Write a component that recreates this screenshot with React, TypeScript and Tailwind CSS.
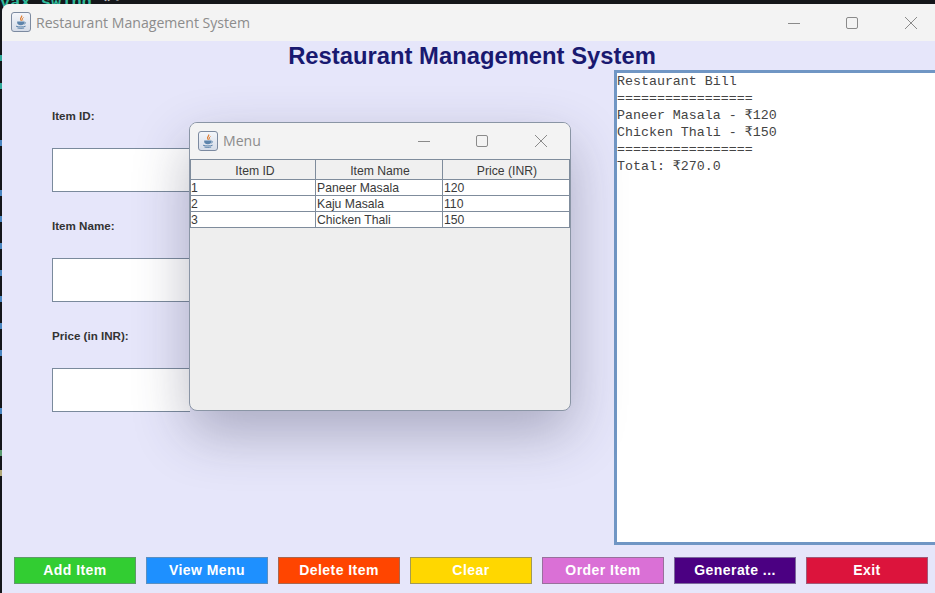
const JavaIcon = () => (
  <span className="flex h-[20px] w-[20px] items-center justify-center rounded-[3px] border border-[#7c8aa0] bg-gradient-to-b from-[#f4f6fa] to-[#d5dce8]">
    <svg viewBox="0 0 16 16" className="h-[16px] w-[16px]" fill="none">
      <path d="M8.6 1.5c1 1.4-1.8 2.3-.9 4 .2.5.6.9.7 1.3" stroke="#e07a2c" strokeWidth="1.2" />
      <path d="M10.5 3.5c-1.4.8-1.4 1.8-.7 3" stroke="#e07a2c" strokeWidth="1" />
      <path d="M4.2 7.6h7.2v1.2c0 1.6-1.4 2.4-3.6 2.4s-3.6-.8-3.6-2.4z" fill="#5d84ab" />
      <path d="M11.4 8.2c1.6-.3 1.8 1.5-.4 1.9" stroke="#5d84ab" strokeWidth=".8" />
      <path d="M3 12.2c2.6 1 7.2 1 9.6 0M4.4 14c2 .5 5 .5 6.8 0" stroke="#5d84ab" strokeWidth="1" />
    </svg>
  </span>
);

const WindowControls = () => (
  <div className="flex items-center gap-[42px]">
    <svg width="16" height="16" viewBox="0 0 16 16" fill="none" stroke="#8a8a8a"><path d="M2 8.5h12" /></svg>
    <svg width="16" height="16" viewBox="0 0 16 16" fill="none" stroke="#8a8a8a"><rect x="2.5" y="2.5" width="11" height="11" rx="1.5" /></svg>
    <svg className="ml-[1px]" width="16" height="16" viewBox="0 0 16 16" fill="none" stroke="#8a8a8a"><path d="M2 2l12 12M14 2L2 14" /></svg>
  </div>
);

const fields = ['Item ID:', 'Item Name:', 'Price (in INR):'];
const buttons = [
  { label: 'Add Item', cls: 'bg-[#32cd32] border-[#5f9a6a]' },
  { label: 'View Menu', cls: 'bg-[#1e90ff] border-[#5b8fc0]' },
  { label: 'Delete Item', cls: 'bg-[#ff4500] border-[#a8674f]' },
  { label: 'Clear', cls: 'bg-[#ffd700] border-[#a39a55]' },
  { label: 'Order Item', cls: 'bg-[#da70d6] border-[#98709c]' },
  { label: 'Generate ...', cls: 'bg-[#4b0082] border-[#7c6a9c]' },
  { label: 'Exit', cls: 'bg-[#dc143c] border-[#a05a78]' },
];
const rows = [
  ['1', 'Paneer Masala', '120'],
  ['2', 'Kaju Masala', '110'],
  ['3', 'Chicken Thali', '150'],
];
const bill = [
  'Restaurant Bill',
  '=================',
  'Paneer Masala - ₹120',
  'Chicken Thali - ₹150',
  '=================',
  'Total: ₹270.0',
];
// bits of the terminal showing at the left edge of the window
const flecks = [
  { y: 55, cls: 'bg-[#2fa89a]' },
  { y: 83, cls: 'bg-[#2fa89a]' },
  { y: 140, cls: 'bg-[#4a86c0]' },
  { y: 190, cls: 'bg-[#4a86c0]' },
  { y: 216, cls: 'bg-[#4a86c0]' },
  { y: 243, cls: 'bg-[#4a86c0]' },
  { y: 270, cls: 'bg-[#4a86c0]' },
  { y: 296, cls: 'bg-[#4a86c0]' },
  { y: 323, cls: 'bg-[#4a86c0]' },
  { y: 350, cls: 'bg-[#4a86c0]' },
  { y: 408, cls: 'bg-[#4a86c0]' },
  { y: 450, cls: 'bg-[#5a9a70]' },
  { y: 470, cls: 'bg-[#b0a878]' },
];

export default function App() {
  return (
    <div className="relative h-[593px] w-[935px] overflow-hidden bg-[#14161a] font-['Liberation_Sans',sans-serif]">
      {/* terminal behind the window */}
      <div className="absolute -top-[6px] left-0 whitespace-nowrap font-['Liberation_Mono',monospace] text-[17px] font-bold leading-none text-[#2fb89a]">
        vax.swing<span className="text-[#c8c8c8]">.*;</span>
      </div>
      {flecks.map((f) => (
        <div key={f.y} className={`absolute left-0 h-[6px] w-[2px] ${f.cls}`} style={{ top: f.y }} />
      ))}

      <div className="absolute left-[2px] top-[4px] flex h-[600px] w-[940px] flex-col overflow-hidden rounded-t-[8px] bg-[#e6e6fa]">
        {/* title bar */}
        <div className="flex h-[37px] flex-none items-center justify-between bg-[#f3f3f3]">
          <div className="flex items-center gap-[5px] pl-[9px]">
            <JavaIcon />
            <span className="font-['Open_Sans',sans-serif] text-[14.1px] text-[#8c8c8c]">Restaurant Management System</span>
          </div>
          <div className="pr-[23px]"><WindowControls /></div>
        </div>

        <h1 className="h-[29px] flex-none text-center text-[23.8px] font-bold leading-[30px] text-[#191970]">
          Restaurant Management System
        </h1>

        <div className="flex h-[475px] flex-none">
          <div className="flex w-[612px] flex-none flex-col pl-[50px] pt-[36px]">
            {fields.map((f) => (
              <div key={f} className="mb-[24px] flex flex-col">
                <label className="h-[20px] text-[11.6px] font-bold leading-[20px] text-[#333333]">{f}</label>
                <input className="mt-[22px] h-[44px] w-[138px] border border-r-0 border-[#7a8a9c] bg-white" />
              </div>
            ))}
          </div>
          <pre className="h-[475px] flex-1 border-[3px] border-[#7096c4] bg-white font-['Liberation_Mono',monospace] text-[13.3px] leading-[17px] text-[#444444]">
            {bill.join('\n')}
          </pre>
        </div>

        <div className="flex flex-none gap-[10px] pl-[12px] pt-[12px]">
          {buttons.map((b) => (
            <button
              key={b.label}
              className={`h-[27px] w-[122px] border text-[14px] font-bold tracking-[0.45px] text-white ${b.cls}`}
            >
              {b.label}
            </button>
          ))}
        </div>
      </div>

      {/* Menu dialog */}
      <div className="absolute left-[189px] top-[122px] flex h-[289px] w-[382px] flex-col overflow-hidden rounded-[8px] border border-[#8a95a5] bg-[#eeeeee] shadow-[0_22px_55px_rgba(50,50,80,0.33)]">
        <div className="flex h-[36px] flex-none items-center justify-between bg-[#f3f3f3] pr-[21px]">
          <div className="flex items-center gap-[5px] pl-[8px]">
            <JavaIcon />
            <span className="font-['Open_Sans',sans-serif] text-[14.1px] text-[#8c8c8c]">Menu</span>
          </div>
          <WindowControls />
        </div>
        <table className="w-[379px] table-fixed border-collapse text-[12.2px] text-[#3a3a3a]">
          <colgroup>
            <col className="w-[125px]" />
            <col className="w-[127px]" />
            <col className="w-[127px]" />
          </colgroup>
          <thead>
            <tr className="h-[20px] bg-[#f0f0f0]">
              {['Item ID', 'Item Name', 'Price (INR)'].map((h, i) => (
                <th
                  key={h}
                  className={`border border-[#7f8c9c] p-0 pt-[2px] text-center font-normal leading-[16px] ${i === 0 ? 'pl-[4px]' : 'pl-[2px]'}`}
                >
                  {h}
                </th>
              ))}
            </tr>
          </thead>
          <tbody>
            {rows.map((r) => (
              <tr key={r[0]} className="h-[16px] bg-white">
                {r.map((c, i) => (
                  <td
                    key={c}
                    className={`border border-[#7f8c9c] pb-0 pr-0 pt-[1px] leading-[14px] ${i === 0 ? 'pl-0' : 'pl-[1px]'}`}
                  >
                    {c}
                  </td>
                ))}
              </tr>
            ))}
          </tbody>
        </table>
      </div>
    </div>
  );
}
